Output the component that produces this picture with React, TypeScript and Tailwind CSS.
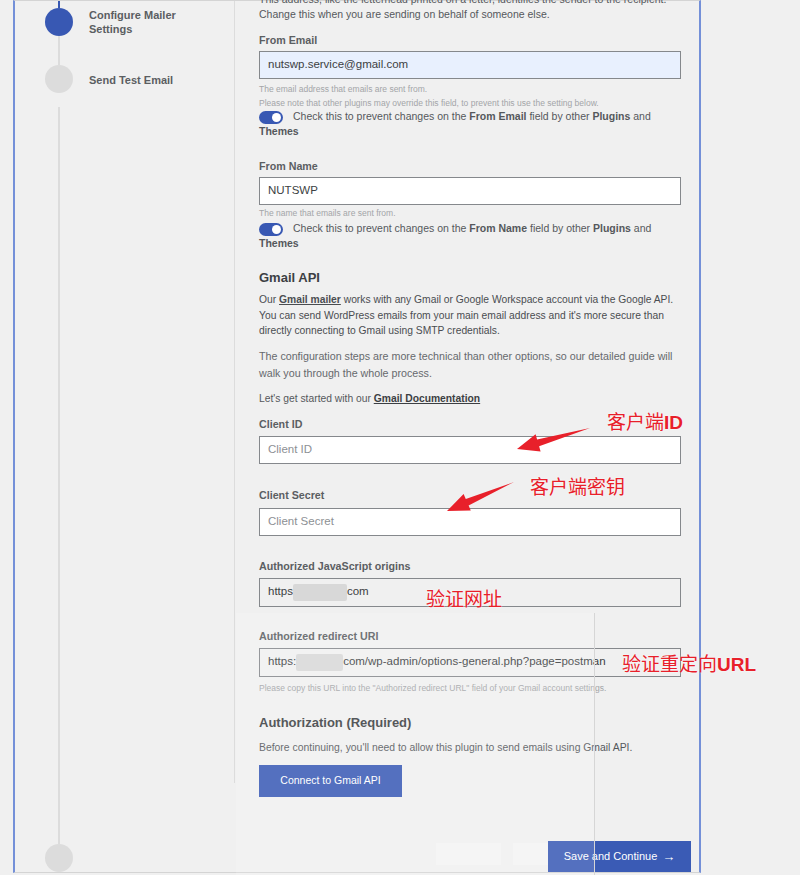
import type { ReactNode } from "react";

const font = { fontFamily: '"Liberation Sans", Arial, "Noto Sans CJK SC", sans-serif' };

function Label({ children, className = "" }: { children: ReactNode; className?: string }) {
  return (
    <div className={`text-[10.7px] font-bold leading-[14px] text-[#5b5e62] ${className}`}>{children}</div>
  );
}

function Field({
  value,
  placeholder,
  className = "",
  tone = "white",
}: {
  value?: ReactNode;
  placeholder?: string;
  className?: string;
  tone?: "white" | "blue" | "gray";
}) {
  const bg = tone === "blue" ? "bg-[#e8f0fe]" : tone === "gray" ? "bg-[#f0f0f0]" : "bg-white";
  return (
    <div
      className={`flex h-[28px] items-center border border-[#85888c] px-[8px] text-[11.5px] ${bg} ${className}`}
    >
      {value !== undefined ? (
        <span className="flex items-center text-[#3c3f43]">{value}</span>
      ) : (
        <span className="text-[#8d9094]">{placeholder}</span>
      )}
    </div>
  );
}

function Toggle() {
  return (
    <span className="mr-[10px] inline-flex h-[13px] w-[24px] translate-y-[2px] items-center justify-end rounded-full bg-[#3858b3] pr-[2px] align-baseline">
      <span className="h-[9px] w-[9px] rounded-full bg-white" />
    </span>
  );
}

function Blur({ w }: { w: number }) {
  return <span className="inline-block h-[17px] rounded-[2px] bg-[#d8d8d8] blur-[0.6px]" style={{ width: w }} />;
}

function Note({ children, className = "" }: { children: ReactNode; className?: string }) {
  return <p className={`text-[8.5px] leading-[12px] text-[#a3a5a8] ${className}`}>{children}</p>;
}

function Arrow({ points }: { points: string }) {
  return <polygon points={points} fill="#e8202a" />;
}

export default function App() {
  return (
    <div className="relative h-[875px] w-[800px] overflow-hidden bg-[#f0f0f0]" style={font}>
      <div className="ml-[13px] flex h-[873px] w-[688px] border-x-2 border-y border-x-[#7490d8] border-y-[#d4d4d4]">
        {/* stepper */}
        <aside className="flex w-[219px] shrink-0 flex-col pl-[30px]">
          <div className="ml-[13px] h-[7px] w-[2px] bg-[#3858b3]" />
          <div className="flex items-start">
            <span className="h-[28px] w-[28px] shrink-0 rounded-full bg-[#3858b3]" />
            <span className="ml-[16px] text-[11px] font-bold leading-[14px] text-[#5b5e62]">
              Configure Mailer
              <br />
              Settings
            </span>
          </div>
          <div className="ml-[13px] h-[29px] w-[2px] bg-[#dcdcdc]" />
          <div className="flex items-center">
            <span className="h-[28px] w-[28px] shrink-0 rounded-full bg-[#dcdcdc]" />
            <span className="ml-[16px] pt-[2px] text-[11px] font-bold leading-[14px] text-[#5b5e62]">
              Send Test Email
            </span>
          </div>
          <div className="h-[14px]" />
          <div className="ml-[13px] w-[2px] flex-1 bg-[#dcdcdc]" />
          <span className="h-[28px] w-[28px] shrink-0 rounded-full bg-[#dcdcdc]" />
        </aside>

        <div className="flex min-w-0 flex-1 flex-col">
          <div className="h-[782px] border-l border-[#dcdcdc] pl-[24px] pr-[18px]">
            <div className="-mt-[9px]">
              <p className="text-[10.5px] leading-[15px] text-[#55585c]">
                This address, like the letterhead printed on a letter, identifies the sender to the recipient.
                <br />
                Change this when you are sending on behalf of someone else.
              </p>

              <Label className="mt-[11px]">From Email</Label>
              <Field className="mt-[4px]" tone="blue" value="nutswp.service@gmail.com" />
              <Note className="mt-[4px]">The email address that emails are sent from.</Note>
              <Note className="mt-[2px]">
                Please note that other plugins may override this field, to prevent this use the setting below.
              </Note>
              <p className="text-[10.5px] leading-[15px] text-[#55585c]">
                <Toggle />
                Check this to prevent changes on the <b>From Email</b> field by other <b>Plugins</b> and{" "}
                <b>Themes</b>
              </p>

              <Label className="mt-[20px]">From Name</Label>
              <Field className="mt-[4px]" value="NUTSWP" />
              <Note className="mt-[2px]">The name that emails are sent from.</Note>
              <p className="mt-[2px] text-[10.5px] leading-[15px] text-[#55585c]">
                <Toggle />
                Check this to prevent changes on the <b>From Name</b> field by other <b>Plugins</b> and{" "}
                <b>Themes</b>
              </p>

              <h2 className="mt-[18px] text-[13px] font-bold leading-[18px] text-[#3c3f43]">Gmail API</h2>
              <p className="mt-[5px] text-[10.3px] leading-[15.5px] text-[#4a4d51]">
                Our <b className="underline">Gmail mailer</b> works with any Gmail or Google Workspace account via the
                Google API. You can send WordPress emails from your main email address and it's more secure than
                directly connecting to Gmail using SMTP credentials.
              </p>
              <p className="mt-[9px] text-[10.7px] leading-[17px] text-[#66696d]">
                The configuration steps are more technical than other options, so our detailed guide will walk you
                through the whole process.
              </p>
              <p className="mt-[9px] text-[10.3px] leading-[15px] text-[#55585c]">
                Let's get started with our <b className="text-[#3c3f43] underline">Gmail Documentation</b>
              </p>

              <Label className="mt-[11px]">Client ID</Label>
              <Field className="mt-[5px]" placeholder="Client ID" />
              <Label className="mt-[24px]">Client Secret</Label>
              <Field className="mt-[6px]" placeholder="Client Secret" />
              <Label className="mt-[23px]">Authorized JavaScript origins</Label>
              <Field
                className="mt-[5px] h-[29px]"
                tone="gray"
                value={
                  <>
                    https
                    <Blur w={54} />
                    com
                  </>
                }
              />
              <Label className="mt-[22px]">Authorized redirect URI</Label>
              <Field
                className="mt-[5px] h-[29px]"
                tone="gray"
                value={
                  <>
                    https:
                    <Blur w={47} />
                    com/wp-admin/options-general.php?page=postman
                  </>
                }
              />
              <Note className="mt-[5px]">
                Please copy this URL into the "Authorized redirect URL" field of your Gmail account settings.
              </Note>

              <h2 className="mt-[20px] text-[13px] font-bold leading-[18px] text-[#3c3f43]">
                Authorization (Required)
              </h2>
              <p className="mt-[9px] text-[10.4px] leading-[14px] text-[#55585c]">
                Before continuing, you'll need to allow this plugin to send emails using Gmail API.
              </p>
              <button className="mt-[10px] h-[32px] w-[143px] bg-[#3a5bb5] text-[10.5px] font-medium text-white">
                Connect to Gmail API
              </button>
            </div>
          </div>

          <div className="mt-[58px] flex items-start justify-end pr-[8px]">
            <span className="mt-[2px] mr-[12px] h-[22px] w-[65px] bg-white/25" />
            <span className="mt-[2px] h-[22px] w-[35px] bg-white/25" />
            <button className="flex h-[31px] w-[143px] items-center justify-center gap-[5px] bg-[#3a5bb5] text-[11px] font-medium text-white">
              Save and Continue <span className="text-[13px]">→</span>
            </button>
          </div>
        </div>
      </div>

      {/* faint screenshot overlay */}
      <div className="pointer-events-none absolute left-[236px] top-[613px] h-[262px] w-[359px] border-r border-[#d6d6d6] bg-white/[0.13]" />

      {/* red annotations */}
      <svg className="pointer-events-none absolute inset-0" width="800" height="875">
        <Arrow points="590,428 537.1,439.5 535.6,434.3 517,449 540.6,451.5 539.1,446.3" />
        <Arrow points="514,482 465.8,499.1 463.6,494 447,511 470.8,510.6 468.6,505.5" />
      </svg>
      <span className="absolute left-[607px] top-[413px] text-[19px] leading-none text-[#e8202a] [text-shadow:0_0_2px_white]">
        客户端<b>ID</b>
      </span>
      <span className="absolute left-[530px] top-[478px] text-[19px] leading-none text-[#e8202a] [text-shadow:0_0_2px_white]">
        客户端密钥
      </span>
      <span className="absolute left-[426px] top-[590px] text-[19px] leading-none text-[#e8202a] [text-shadow:0_0_2px_white]">
        验证网址
      </span>
      <span className="absolute left-[622px] top-[655px] text-[19px] leading-none text-[#e8202a] [text-shadow:0_0_2px_white]">
        验证重定向<b>URL</b>
      </span>
    </div>
  );
}
